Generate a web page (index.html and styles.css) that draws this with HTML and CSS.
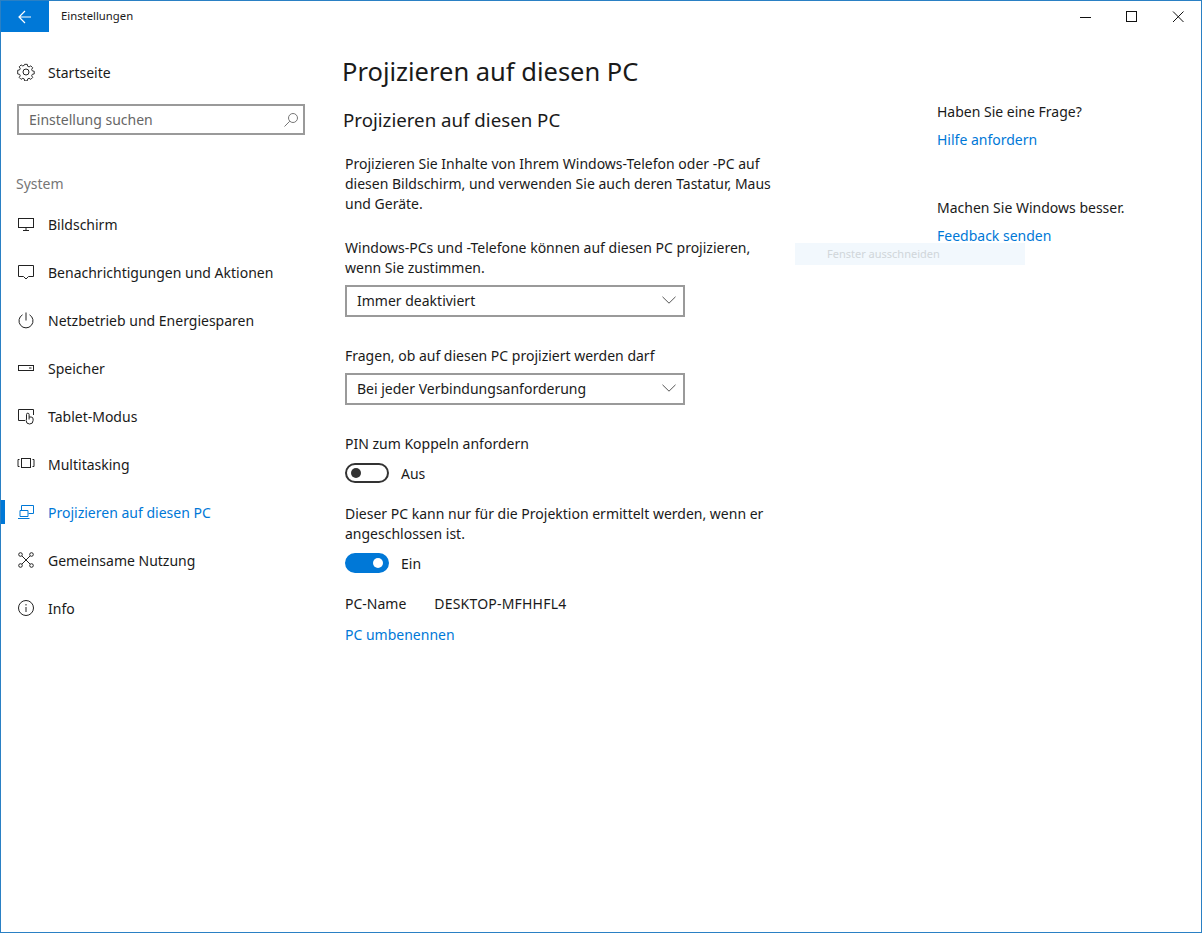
FILE: index.html
```html
<!DOCTYPE html>
<html lang="de">
<head>
  <meta charset="UTF-8">
  <title>Einstellungen</title>
  <link rel="stylesheet" href="styles.css">
</head>
<body>
  <div class="window">
    <!-- Titlebar -->
    <div class="titlebar">
      <div class="back-btn">
        <svg width="16" height="16" viewBox="0 0 16 16" fill="none" stroke="#fff" stroke-width="1.2"><path d="M14 8H2M8 2L2 8l6 6"/></svg>
      </div>
      <div class="app-title">Einstellungen</div>
      <div class="win-controls">
        <svg class="win-btn" width="46" height="31" viewBox="0 0 46 31" fill="none" stroke="#111"><path d="M17 16.5h11"/></svg>
        <svg class="win-btn" width="46" height="31" viewBox="0 0 46 31" fill="none" stroke="#111"><rect x="17.5" y="10.5" width="10" height="10"/></svg>
        <svg class="win-btn" width="46" height="31" viewBox="0 0 46 31" fill="none" stroke="#111"><path d="M18 10.5l10.500 10.500M28.500 10.500L18 21"/></svg>
      </div>
    </div>

    <div class="content">
      <!-- Sidebar -->
      <div class="sidebar">
        <div class="nav-item home">
          <svg class="nav-icon" width="18" height="18" viewBox="0 0 18 18" fill="none" stroke="#222"><path d="M7.6 1.2h2.8l.4 2 1.500.7 1.800-1.100 2 2-1.100 1.800.7 1.500 2 .4v2.800l-2 .4-.7 1.500 1.100 1.800-2 2-1.800-1.100-1.500.7-.4 2H7.600l-.4-2-1.500-.7-1.800 1.100-2-2 1.100-1.800-.7-1.500-2-.4V7.500l2-.4.7-1.500-1.100-1.800 2-2 1.800 1.100 1.500-.7z" transform="translate(.4 .2) scale(.95)"/><circle cx="9" cy="9" r="3"/></svg>
          <span>Startseite</span>
        </div>
        <div class="search-box">
          <span>Einstellung suchen</span>
          <svg width="16" height="16" viewBox="0 0 16 16" fill="none" stroke="#777"><circle cx="10" cy="6" r="4.500"/><path d="M6.800 9.200L1.500 14.500"/></svg>
        </div>
        <div class="nav-section">System</div>
        <div class="nav-item">
          <svg class="nav-icon" width="18" height="18" viewBox="0 0 18 18" fill="none" stroke="#222"><rect x="1.500" y="3.500" width="15" height="9"/><path d="M9 12.500v3M6 15.500h6"/></svg>
          <span>Bildschirm</span>
        </div>
        <div class="nav-item">
          <svg class="nav-icon" width="18" height="18" viewBox="0 0 18 18" fill="none" stroke="#222"><path d="M1.500 2.500h15v11h-5L9 16l-2.500-2.500h-5z"/></svg>
          <span>Benachrichtigungen und Aktionen</span>
        </div>
        <div class="nav-item">
          <svg class="nav-icon" width="18" height="18" viewBox="0 0 18 18" fill="none" stroke="#222"><path d="M9 1.500v8M5.500 3.800a7 7 0 1 0 7 0"/></svg>
          <span>Netzbetrieb und Energiesparen</span>
        </div>
        <div class="nav-item">
          <svg class="nav-icon" width="18" height="18" viewBox="0 0 18 18" fill="none" stroke="#222"><rect x="1.500" y="6.500" width="15" height="5"/><path d="M12 9h2.500"/></svg>
          <span>Speicher</span>
        </div>
        <div class="nav-item">
          <svg class="nav-icon" width="18" height="18" viewBox="0 0 18 18" fill="none" stroke="#222"><path d="M8 13.500H1.500v-11h15V8"/><path d="M9.500 12V7.500a1.300 1.300 0 0 1 2.600 0V10h2a2 2 0 0 1 2 2v1.500a3.500 3.500 0 0 1-7 0zM12.100 10v2.500"/></svg>
          <span>Tablet-Modus</span>
        </div>
        <div class="nav-item">
          <svg class="nav-icon" width="18" height="18" viewBox="0 0 18 18" fill="none" stroke="#222"><rect x="4.500" y="3.500" width="9" height="9"/><path d="M2.500 4.500h-1.500v7h1.500M15.500 4.500h1.500v7h-1.500"/></svg>
          <span>Multitasking</span>
        </div>
        <div class="nav-item active">
          <svg class="nav-icon" width="18" height="18" viewBox="0 0 18 18" fill="none" stroke="#0078d7"><path d="M4.500 7V2.500h12v8h-5"/><path d="M3 7.500h8v6H3zM1 15.500h11.500"/></svg>
          <span>Projizieren auf diesen PC</span>
        </div>
        <div class="nav-item">
          <svg class="nav-icon" width="18" height="18" viewBox="0 0 18 18" fill="none" stroke="#222"><circle cx="3.500" cy="3.500" r="1.800"/><circle cx="14.500" cy="3.500" r="1.800"/><circle cx="3.500" cy="14.500" r="1.800"/><circle cx="14.500" cy="14.500" r="1.800"/><path d="M5 5l8 8M13 5l-8 8"/></svg>
          <span>Gemeinsame Nutzung</span>
        </div>
        <div class="nav-item">
          <svg class="nav-icon" width="18" height="18" viewBox="0 0 18 18" fill="none" stroke="#222"><circle cx="9" cy="9" r="7.500"/><path d="M9 8v5M9 5v1.500"/></svg>
          <span>Info</span>
        </div>
      </div>

      <!-- Main -->
      <div class="main">
        <h1>Projizieren auf diesen PC</h1>
        <h2>Projizieren auf diesen PC</h2>
        <p class="intro">Projizieren Sie Inhalte von Ihrem Windows-Telefon oder -PC auf diesen Bildschirm, und verwenden Sie auch deren Tastatur, Maus und Geräte.</p>

        <p class="field-label">Windows-PCs und -Telefone können auf diesen PC projizieren, wenn Sie zustimmen.</p>
        <div class="dropdown">
          <span>Immer deaktiviert</span>
          <svg width="14" height="8" viewBox="0 0 14 8" fill="none" stroke="#555"><path d="M.5 .8L7 7.200 13.500 .8"/></svg>
        </div>

        <p class="field-label second">Fragen, ob auf diesen PC projiziert werden darf</p>
        <div class="dropdown">
          <span>Bei jeder Verbindungsanforderung</span>
          <svg width="14" height="8" viewBox="0 0 14 8" fill="none" stroke="#555"><path d="M.5 .8L7 7.200 13.500 .8"/></svg>
        </div>

        <p class="field-label pin">PIN zum Koppeln anfordern</p>
        <div class="toggle-row">
          <div class="toggle"><div class="knob"></div></div>
          <span>Aus</span>
        </div>

        <p class="field-label docked">Dieser PC kann nur für die Projektion ermittelt werden, wenn er angeschlossen ist.</p>
        <div class="toggle-row">
          <div class="toggle on"><div class="knob"></div></div>
          <span>Ein</span>
        </div>

        <div class="pc-name">
          <span>PC-Name</span>
          <span class="pc-value">DESKTOP-MFHHFL4</span>
        </div>
        <a class="link rename" href="#">PC umbenennen</a>
      </div>

      <!-- Right column -->
      <div class="aside">
        <div class="aside-title">Haben Sie eine Frage?</div>
        <a class="link" href="#">Hilfe anfordern</a>
        <div class="aside-title lower">Machen Sie Windows besser.</div>
        <a class="link" href="#">Feedback senden</a>
      </div>
    </div>

    <div class="ghost-tooltip">Fenster ausschneiden</div>
  </div>
</body>
</html>
```

FILE: styles.css
```css
html, body {
  margin: 0;
  padding: 0;
}

body {
  font-family: "Noto Sans", "Open Sans", sans-serif;
  font-size: 14px;
  color: #1a1a1a;
  background-color: #fff;
}

.window {
  position: relative;
  width: 1202px;
  height: 933px;
  box-sizing: border-box;
  border: 1px solid #2a80c4;
  overflow: hidden;
}

.titlebar {
  display: flex;
  align-items: center;
  height: 31px;
}

.back-btn {
  display: flex;
  align-items: center;
  justify-content: center;
  width: 48px;
  height: 31px;
  background-color: #0078d7;
}

.app-title {
  margin-left: 12px;
  margin-bottom: 2px;
  font-size: 11.3px;
}

.win-controls {
  display: flex;
  margin-left: auto;
}

.win-btn {
  display: block;
}

.content {
  display: flex;
}

.sidebar {
  width: 320px;
  flex: none;
}

.nav-item {
  display: flex;
  align-items: center;
  height: 48px;
  padding-left: 16px;
  position: relative;
}

.nav-item.home {
  margin-top: 16px;
}

.nav-icon {
  flex: none;
  margin-right: 13px;
}

.nav-item.active {
  color: #0078d7;
}

.nav-item.active::before {
  content: "";
  position: absolute;
  left: 0;
  top: 12px;
  width: 4px;
  height: 24px;
  background-color: #0078d7;
}

.search-box {
  display: flex;
  align-items: center;
  justify-content: space-between;
  box-sizing: border-box;
  width: 288px;
  height: 31px;
  margin: 8px 0 0 16px;
  padding: 0 4px 0 10px;
  border: 2px solid #9a9a9a;
  color: #666;
}

.nav-section {
  margin: 38px 0 0 15px;
  height: 27px;
  line-height: 22px;
  color: #767676;
}

.main {
  width: 450px;
  flex: none;
  padding-left: 24px;
}

h1 {
  margin: 15px 0 0 -3px;
  font-size: 25.5px;
  font-weight: 400;
  line-height: 48px;
}

h2 {
  margin: 11px 0 0 -2px;
  font-size: 18.7px;
  font-weight: 400;
  line-height: 28px;
}

p {
  margin: 0;
  line-height: 20px;
}

.intro {
  margin-top: 20px;
  width: 440px;
}

.field-label {
  margin-top: 24px;
  width: 430px;
}

.field-label.second {
  margin-top: 29px;
}

.field-label.pin {
  margin-top: 29px;
}

.field-label.docked {
  margin-top: 21px;
}

.dropdown {
  display: flex;
  align-items: center;
  justify-content: space-between;
  box-sizing: border-box;
  width: 340px;
  height: 32px;
  margin-top: 7px;
  padding: 0 7px 2px 10px;
  border: 2px solid #9a9a9a;
}

.toggle-row {
  display: flex;
  align-items: center;
  gap: 12px;
  height: 20px;
  margin-top: 9px;
}

.toggle {
  display: flex;
  align-items: center;
  box-sizing: border-box;
  width: 44px;
  height: 20px;
  padding: 0 4px;
  border: 2px solid #333;
  border-radius: 10px;
}

.knob {
  width: 10px;
  height: 10px;
  border-radius: 50%;
  background-color: #333;
}

.toggle.on {
  justify-content: flex-end;
  border-color: #0078d7;
  background-color: #0078d7;
}

.toggle.on .knob {
  background-color: #fff;
}

.pc-name {
  display: flex;
  gap: 28px;
  margin-top: 21px;
  line-height: 20px;
}

.pc-value {
  letter-spacing: 0.2px;
}

.link {
  display: block;
  color: #0078d7;
  text-decoration: none;
  line-height: 20px;
}

.link.rename {
  margin-top: 11px;
}

.aside {
  margin-left: 142px;
  padding-top: 70px;
}

.aside-title {
  line-height: 20px;
  margin-bottom: 8px;
}

.aside-title.lower {
  margin-top: 48px;
}

.ghost-tooltip {
  position: absolute;
  left: 794px;
  top: 242px;
  width: 230px;
  height: 22px;
  box-sizing: border-box;
  padding-left: 32px;
  background-color: #f2f8fd;
  color: #d0d6da;
  font-size: 11px;
  line-height: 22px;
}
```
